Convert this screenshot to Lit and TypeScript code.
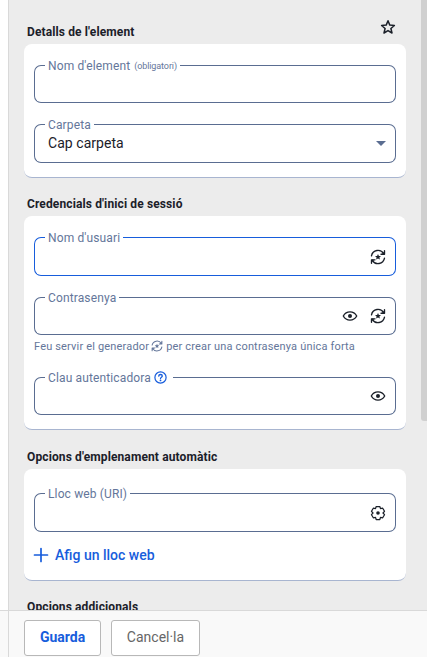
import { LitElement, html, css, svg, nothing } from "lit";
import type { TemplateResult } from "lit";
import { customElement, property } from "lit/decorators.js";

const icons: Record<string, TemplateResult> = {
  star: svg`<path d="M8 1.8 9.8 6.1 14.4 6.5 10.9 9.5 12 14 8 11.6 4 14 5.1 9.5 1.6 6.5 6.2 6.1Z" fill="none" stroke="currentColor" stroke-width="1.5" stroke-linejoin="round"/>`,
  generate: svg`<g fill="none" stroke="currentColor" stroke-width="1.35" stroke-linecap="round" stroke-linejoin="round">
    <path d="M1.5 6.8A6.6 6.6 0 0 1 13.7 4.7"/><path d="M14.5 1.7V5.2H11"/>
    <path d="M14.5 9.2A6.6 6.6 0 0 1 2.3 11.3"/><path d="M1.5 14.3V10.8H5"/></g>
    <path d="M11.6 5.2h2.9V2.4Z M4.4 10.8H1.5V13.6Z" fill="currentColor"/>
    <path d="M8 4.9 8.9 6.9 11 7.1 9.4 8.5 9.9 10.600 8 9.500 6.100 10.600 6.600 8.500 5 7.100 7.100 6.900Z" fill="currentColor"/>`,
  eye: svg`<path d="M1.3 8C2.8 5.3 5.2 3.9 8 3.9S13.2 5.3 14.7 8C13.2 10.7 10.8 12.1 8 12.1S2.8 10.7 1.3 8Z" fill="none" stroke="currentColor" stroke-width="1.4" stroke-linejoin="round"/><circle cx="8" cy="8" r="2" fill="currentColor"/>`,
  gear: svg`<path d="M6.2 1.5H9.8L10.5 3.6 12.700 3.200 14.500 6.300 13 8 14.500 9.700 12.700 12.800 10.500 12.400 9.800 14.500H6.200L5.500 12.400 3.300 12.800 1.500 9.700 3 8 1.500 6.300 3.300 3.200 5.500 3.600Z" fill="none" stroke="currentColor" stroke-width="1.250" stroke-linejoin="round"/><circle cx="8" cy="8" r="1.800" fill="currentColor"/>`,
  help: svg`<circle cx="8" cy="8" r="6.900" fill="none" stroke="currentColor" stroke-width="1.500"/><path d="M5.800 6.300C5.900 4.900 6.800 4.300 8 4.300s2.200.8 2.200 1.900C10.200 7.700 8 7.700 8 9.300" fill="none" stroke="currentColor" stroke-width="1.600" stroke-linecap="round"/><circle cx="8" cy="11.600" r="1.100" fill="currentColor"/>`,
  plus: svg`<path d="M8 1.500v13M1.500 8h13" fill="none" stroke="currentColor" stroke-width="1.700" stroke-linecap="round"/>`,
};

@customElement("vault-icon")
class VaultIcon extends LitElement {
  @property() name = "star";
  static styles = css`
    :host { display: inline-block; width: 16px; height: 16px; flex: none; }
    svg { display: block; width: 100%; height: 100%; }
  `;
  render() {
    return html`<svg viewBox="0 0 16 16" aria-hidden="true">${icons[this.name]}</svg>`;
  }
}

@customElement("vault-field")
class VaultField extends LitElement {
  @property() label = "";
  @property() note = "";
  @property() value = "";
  @property({ type: Boolean }) help = false;
  @property({ type: Boolean }) select = false;
  @property({ type: Array }) actions: string[] = [];
  static styles = css`
    :host { display: grid; height: 38px; box-sizing: border-box; --line: #5a6d91; }
    :host([tall]) { height: 39px; }
    :host([active]) { --line: #175ddc; }
    .outline, .content { grid-area: 1 / 1; display: flex; min-width: 0; }
    .start, .label, .end { box-sizing: border-box; border: 0 solid var(--line); border-bottom-width: 1px; }
    .start { width: 11px; border-width: 1px 0 1px 1px; border-radius: 7px 0 0 7px; }
    .end { flex: 1; border-width: 1px 1px 1px 0; border-radius: 0 7px 7px 0; }
    .label { padding: 0 3px; color: #64769a; font-size: 12px; letter-spacing: 0.13px; white-space: nowrap; }
    .text { display: flex; align-items: center; height: 16px; margin-top: -7px; line-height: 16px; }
    .note { font-size: 9px; margin-left: 4px; letter-spacing: -0.1px; }
    .help { width: 13px; height: 13px; margin: -1px 3px 0 3px; color: #175ddc; }
    .content { align-items: center; padding: 0 10px 0 14px; color: #1b2029; }
    .value { flex: 1; font-size: 14px; letter-spacing: 0.05px; line-height: 20px; margin-top: -2px; }
    .action { margin-left: 12px; }
    .arrow { border: 5px solid transparent; border-top-color: #5a6d91; border-bottom: 0; }
  `;
  render() {
    return html`
      <div class="outline">
        <div class="start"></div>
        <div class="label"><div class="text">${this.label}
          ${this.note ? html`<span class="note">${this.note}</span>` : nothing}
          ${this.help ? html`<vault-icon class="help" name="help"></vault-icon>` : nothing}</div></div>
        <div class="end"></div>
      </div>
      <div class="content">
        <span class="value">${this.value}</span>
        ${this.actions.map((a) => html`<vault-icon class="action" name=${a}></vault-icon>`)}
        ${this.select ? html`<span class="arrow"></span>` : nothing}
      </div>`;
  }
}

@customElement("app-root")
class AppRoot extends LitElement {
  static styles = css`
    :host {
      display: flex; flex-direction: column; height: 657px; overflow: hidden;
      background: #fff; color: #1b2029; font-family: Roboto, sans-serif;
    }
    .body { display: flex; height: 610px; box-sizing: border-box; padding-left: 8px; overflow: hidden; }
    .pane { flex: 1; border-left: 1px solid #d9d9d9; background: #ececec; padding: 0 15px; overflow: hidden; }
    .track { width: 6px; background: #ececec; }
    .thumb { height: 421px; background: #d0d0d0; border-radius: 0 0 0 3px; }
    .head { display: flex; justify-content: space-between; align-items: flex-end; padding: 0 10px 3px 3px; box-sizing: border-box; height: 38px; }
    .head.first { height: 44px; }
    .head.options { height: 39px; }
    h2 { margin: 0; font-size: 12px; font-weight: 700; line-height: 17px; letter-spacing: 0.12px; }
    .star { margin-bottom: 6px; }
    .card { display: flex; flex-direction: column; box-sizing: border-box; background: #fff; border-bottom: 1px solid #a8b5d0; border-radius: 8px; padding: 21px 10px 14px; }
    .basics { gap: 21px; }
    .logins { gap: 21px; }
    .websites { padding-top: 24px; }
    .hint { display: flex; align-items: center; height: 16px; margin-top: -18px; margin-bottom: 2px; font-size: 11px; letter-spacing: 0.17px; color: #64769a; white-space: pre; }
    .hint vault-icon { width: 12px; height: 12px; margin: 0 3px 0 2px; }
    .add { display: flex; align-items: center; height: 20px; margin: 13px 0 1px; padding: 0; border: 0; background: none; color: #175ddc; font: 500 14px/20px Roboto, sans-serif; }
    .add vault-icon { margin: 0 6px 0 -1px; }
    .footer { flex: 1; display: flex; gap: 10px; border-top: 1px solid #d9d9d9; background: #f9f9f9; padding-left: 8px; }
    .buttons { flex: 1; display: flex; align-items: flex-start; gap: 10px; border-left: 1px solid #d9d9d9; padding: 9px 15px 0; }
    .button { box-sizing: border-box; width: 77px; height: 36px; padding: 0 0 2px; border: 1px solid #b8b8b8; border-radius: 3px; background: #fff; font: 400 14px/20px Roboto, sans-serif; color: #666; }
    .save { font-weight: 700; color: #175ddc; }
    .cancel { width: 89px; }
  `;
  render() {
    return html`
      <div class="body">
        <main class="pane">
          <div class="head first"><h2>Detalls de l'element</h2><vault-icon class="star" name="star"></vault-icon></div>
          <section class="card basics">
            <vault-field label="Nom d'element" note="(obligatori)"></vault-field>
            <vault-field tall select label="Carpeta" value="Cap carpeta"></vault-field>
          </section>
          <div class="head"><h2>Credencials d'inici de sessió</h2></div>
          <section class="card logins">
            <vault-field tall active label="Nom d'usuari" .actions=${["generate"]}></vault-field>
            <vault-field label="Contrasenya" .actions=${["eye", "generate"]}></vault-field>
            <div class="hint"><span>Feu servir el generador</span><vault-icon name="generate"></vault-icon><span>per crear una contrasenya única forta</span></div>
            <vault-field help label="Clau autenticadora" .actions=${["eye"]}></vault-field>
          </section>
          <div class="head options"><h2>Opcions d'emplenament automàtic</h2></div>
          <section class="card websites">
            <vault-field tall label="Lloc web (URI)" .actions=${["gear"]}></vault-field>
            <button class="add"><vault-icon name="plus"></vault-icon>Afig un lloc web</button>
          </section>
          <div class="head"><h2>Opcions addicionals</h2></div>
        </main>
        <div class="track"><div class="thumb"></div></div>
      </div>
      <footer class="footer"><div class="buttons">
        <button class="button save">Guarda</button>
        <button class="button cancel">Cancel·la</button>
      </div></footer>`;
  }
}
